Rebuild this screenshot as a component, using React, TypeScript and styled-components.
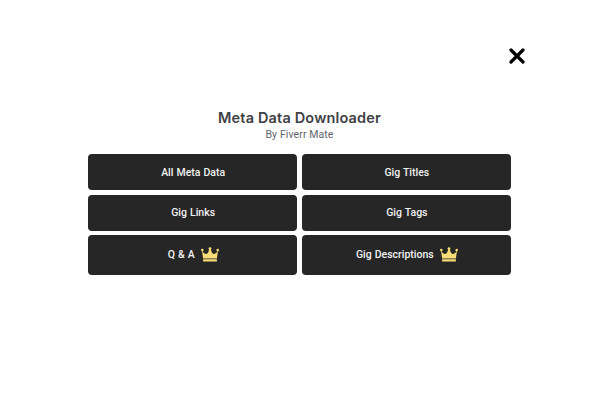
import React from "react";
import styled, { createGlobalStyle } from "styled-components";

const GlobalStyle = createGlobalStyle`
  * { box-sizing: border-box; }
  body { margin: 0; background: #fff; font-family: Inter, "Liberation Sans", sans-serif; }
`;

const Page = styled.main`
  width: 600px;
  height: 400px;
  padding: 48px 89px 0 88px;
  display: flex;
  flex-direction: column;
`;

const CloseButton = styled.button`
  align-self: flex-end;
  width: 16px;
  height: 16px;
  margin-right: -14px;
  padding: 0;
  border: 0;
  background: none;
  svg { display: block; }
`;

const Header = styled.header`
  margin-top: 44px;
  height: 46.3px;
  text-align: center;
`;

const Title = styled.h1`
  margin: 0;
  font-size: 14.5px;
  line-height: 19px;
  font-weight: 600;
  letter-spacing: 0.16px;
  color: #404145;
`;

const Byline = styled.p`
  margin: 0;
  font: 400 10.5px/15px Roboto, "Liberation Sans", sans-serif;
  letter-spacing: 0.1px;
  color: #62646a;
`;

const Grid = styled.div`
  display: grid;
  grid-template-columns: 1fr 1fr;
  grid-template-rows: 36px 36px 39.6px;
  gap: 4.4px;
`;

const Action = styled.button`
  display: flex;
  align-items: center;
  justify-content: center;
  gap: 6px;
  padding: 0 0 0 1px;
  border: 0;
  border-radius: 4px;
  background: #262626;
  color: #f2f2f2;
  font: 500 10.5px Roboto, "Liberation Sans", sans-serif;
  word-spacing: 0.4px;
`;

const Crown = () => (
  <svg width="18" height="15" viewBox="0 0 18 15" fill="#f7dc78">
    <circle cx="1.3" cy="3.1" r="1.3" />
    <circle cx="9" cy="1.6" r="1.4" />
    <circle cx="16.7" cy="3.1" r="1.3" />
    <path d="M1 3.4Q3.2 7.4 5.2 7Q7.5 6.6 8.2 1.8H9.8Q10.5 6.6 12.8 7Q14.8 7.4 17 3.4L15.9 11.4H2.1ZM2.1 12.3H15.9V14.6H2.1Z" />
  </svg>
);

const actions = [
  { label: "All Meta Data" },
  { label: "Gig Titles" },
  { label: "Gig Links" },
  { label: "Gig Tags" },
  { label: "Q & A", premium: true },
  { label: "Gig Descriptions", premium: true },
];

export default function App() {
  return (
    <Page>
      <GlobalStyle />
      <CloseButton aria-label="Close">
        <svg width="16" height="16" viewBox="0 0 16 16" stroke="#000" strokeWidth="3.2" strokeLinecap="round">
          <path d="M2 2l12 12M14 2L2 14" />
        </svg>
      </CloseButton>
      <Header>
        <Title>Meta Data Downloader</Title>
        <Byline>By Fiverr Mate</Byline>
      </Header>
      <Grid>
        {actions.map((a) => (
          <Action key={a.label}>{a.label}{a.premium && <Crown />}</Action>
        ))}
      </Grid>
    </Page>
  );
}
